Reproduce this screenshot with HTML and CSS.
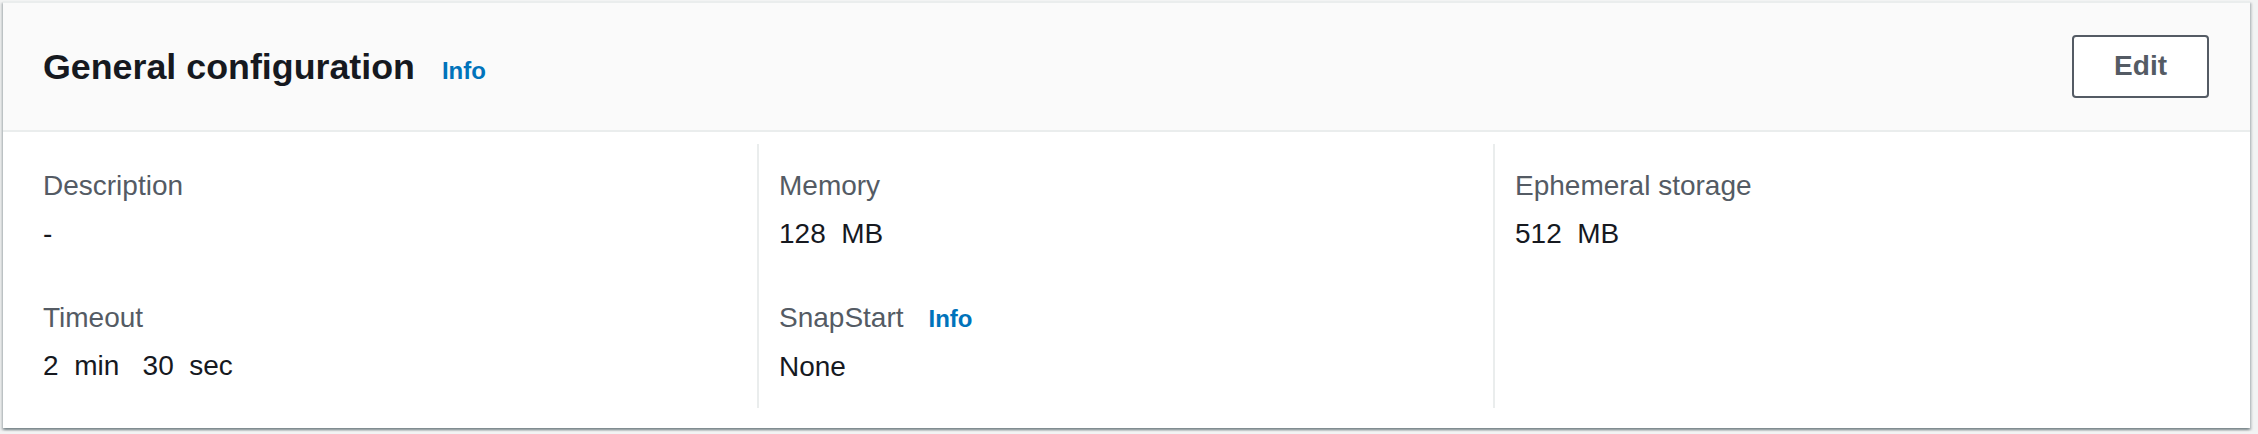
FILE: index.html
```html
<!DOCTYPE html>
<html lang="en">
<head>
<meta charset="utf-8">
<title>General configuration</title>
<link rel="stylesheet" href="styles.css">
</head>
<body>
<section class="container">
  <header class="container-header">
    <div class="heading">
      <h2 class="title">General configuration</h2>
      <a class="info-link info-link--title" href="#">Info</a>
    </div>
    <button class="btn" type="button">Edit</button>
  </header>
  <div class="container-body">
    <div class="column">
      <div class="pair">
        <div class="label">Description</div>
        <div class="value">-</div>
      </div>
      <div class="pair">
        <div class="label">Timeout</div>
        <div class="value">2  min   30  sec</div>
      </div>
    </div>
    <div class="column column--divided">
      <div class="pair">
        <div class="label">Memory</div>
        <div class="value">128  MB</div>
      </div>
      <div class="pair">
        <div class="label">SnapStart<a class="info-link info-link--label" href="#">Info</a></div>
        <div class="value">None</div>
      </div>
    </div>
    <div class="column column--divided">
      <div class="pair">
        <div class="label">Ephemeral storage</div>
        <div class="value">512  MB</div>
      </div>
    </div>
  </div>
</section>
</body>
</html>
```

FILE: styles.css
```css
html, body {
  margin: 0;
  padding: 0;
}

body {
  background: #f2f3f3;
  font-family: "Liberation Sans", Arial, sans-serif;
  color: #16191f;
  padding: 1px 8px 7px 3px;
}

.container {
  background: #ffffff;
  border-top: 2px solid #eaeded;
  box-shadow: 0 2px 2px 0 rgba(0, 28, 36, 0.3),
              2px 2px 2px 0 rgba(0, 28, 36, 0.15),
              -2px 2px 2px 0 rgba(0, 28, 36, 0.15);
}

.container-header {
  background: #fafafa;
  border-bottom: 2px solid #eaeded;
  height: 127px;
  display: flex;
  align-items: center;
  justify-content: space-between;
  padding: 0 41px 0 40px;
}

.heading {
  display: flex;
  align-items: baseline;
}

.title {
  margin: 0;
  font-size: 35.8px;
  line-height: 44px;
  font-weight: 700;
  color: #16191f;
}

.info-link {
  font-size: 24px;
  font-weight: 700;
  color: #0073bb;
  text-decoration: none;
}

.info-link--title {
  margin-left: 27px;
}

.info-link--label {
  margin-left: 25px;
}

.btn {
  box-sizing: border-box;
  height: 63px;
  padding: 0 40px;
  background: #ffffff;
  border: 2px solid #545b64;
  border-radius: 4px;
  color: #545b64;
  font-family: "Liberation Sans", Arial, sans-serif;
  font-size: 28px;
  font-weight: 700;
  line-height: 40px;
  margin-top: -1px;
}

.container-body {
  display: grid;
  grid-template-columns: repeat(3, 1fr);
  padding: 12px 21px 20px 18px;
}

.column {
  border-left: 2px solid transparent;
  padding: 22px 20px 21px 20px;
}

.column--divided {
  border-left-color: #eaeded;
}

.pair + .pair {
  margin-top: 44px;
}

.label {
  font-size: 28px;
  line-height: 40px;
  color: #545b64;
  margin-bottom: 8px;
}

.value {
  font-size: 28px;
  line-height: 40px;
  color: #16191f;
  white-space: pre;
}
```
